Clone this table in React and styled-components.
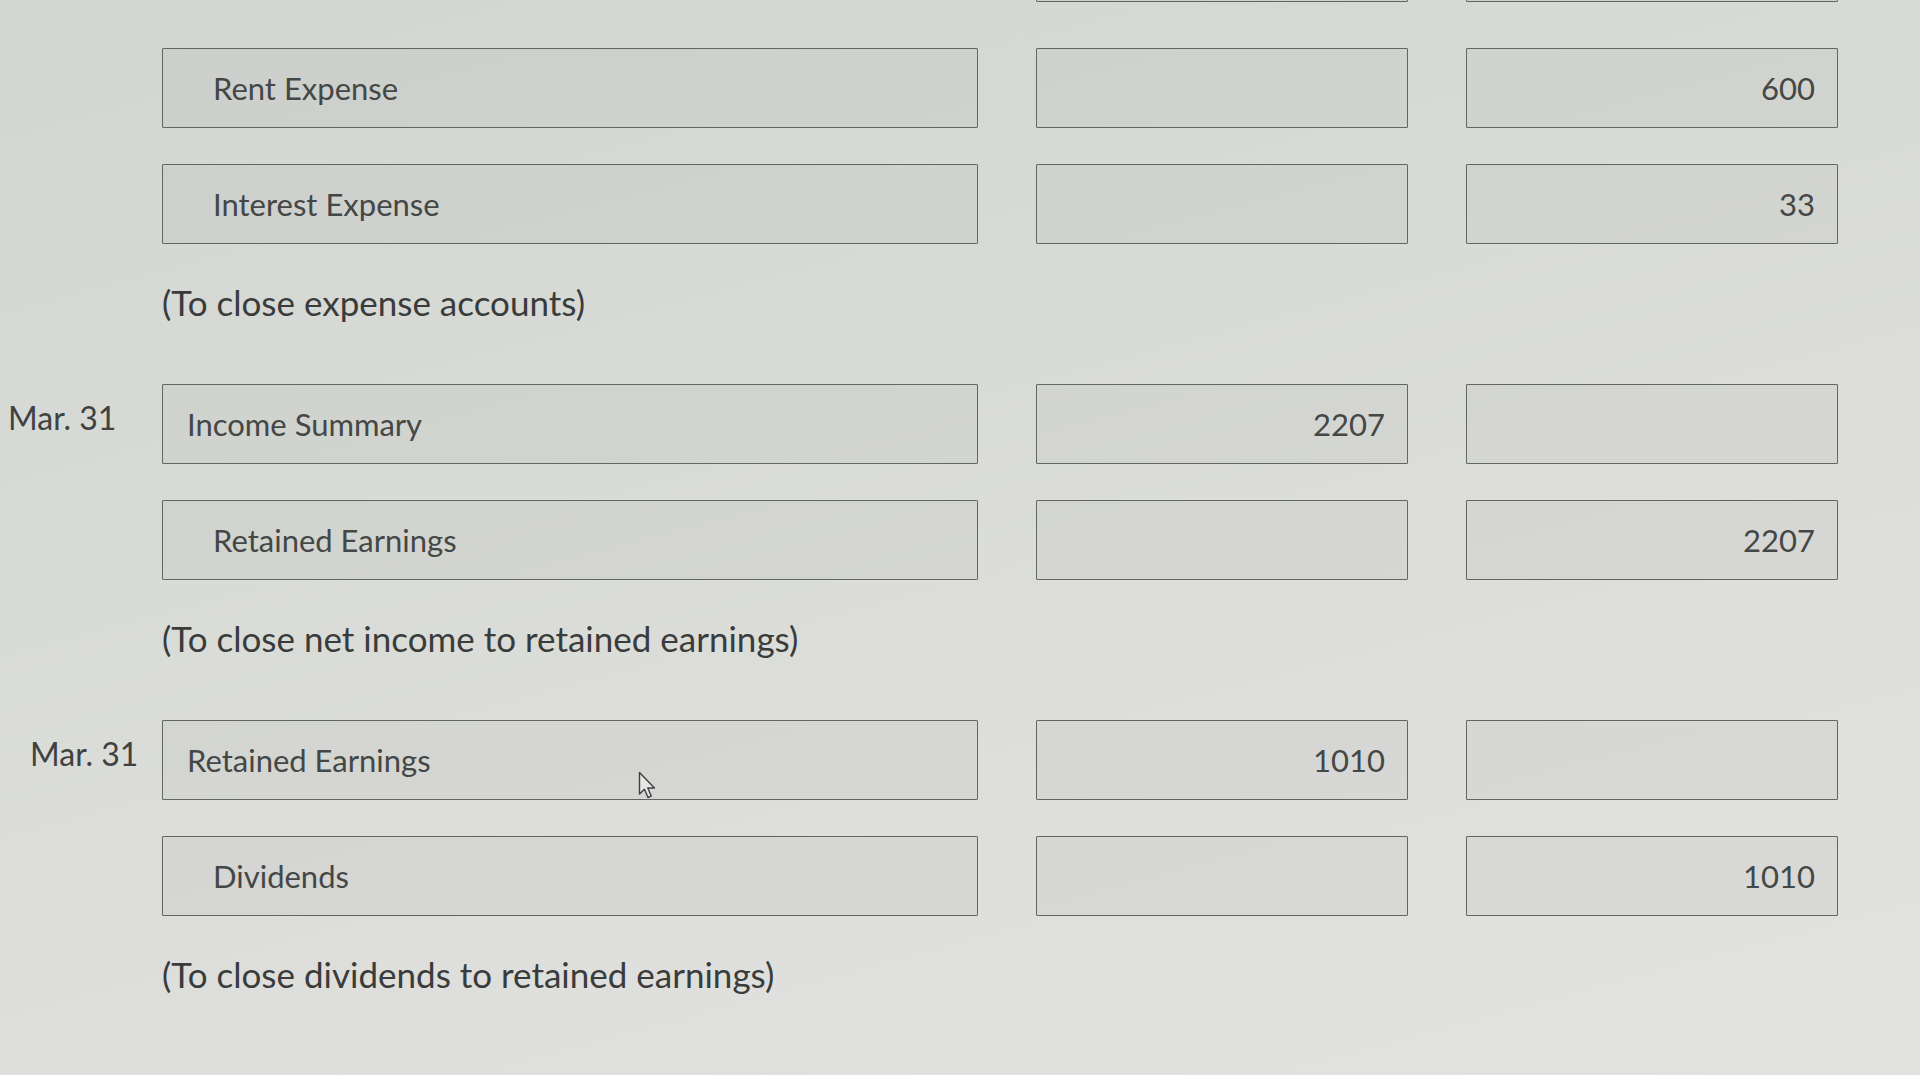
import styled, { createGlobalStyle } from 'styled-components';

const GlobalStyle = createGlobalStyle`
  html, body {
    margin: 0;
    padding: 0;
    height: 100%;
  }
  body {
    font-family: Lato, "Open Sans", "Liberation Sans", sans-serif;
    background: linear-gradient(165deg, #d2d5d1 0%, #d9dbd7 40%, #dfe0dd 75%, #e2e3e0 100%);
    overflow: hidden;
  }
`;

const Page = styled.main`
  position: relative;
  width: 1920px;
  height: 1075px;
  overflow: hidden;
  padding-left: 8px;
  box-sizing: border-box;
`;

const Journal = styled.div`
  display: flex;
  flex-direction: column;
  margin-top: -78px;
`;

const Entry = styled.section`
  display: flex;
  flex-direction: column;
  gap: 36px;
`;

const Line = styled.div`
  display: grid;
  grid-template-columns: 96px 816px 372px 372px;
  column-gap: 58px;
  height: 80px;
`;

const DateCell = styled.div`
  align-self: start;
  padding-top: 14px;
  padding-left: ${({ $shift }) => $shift || 0}px;
  font-size: 32px;
  color: #3f4241;
  white-space: nowrap;
`;

const Field = styled.div`
  display: flex;
  align-items: center;
  justify-content: ${({ $num }) => ($num ? 'flex-end' : 'flex-start')};
  padding: ${({ $num, $indent }) =>
    $num ? '0 22px 0 0' : `0 0 0 ${$indent ? 50 : 24}px`};
  border: 1.5px solid #616563;
  border-radius: 1px;
  background: rgba(95, 100, 95, 0.06);
  font-size: 31px;
  color: #444746;
  box-sizing: border-box;
  visibility: ${({ $hidden }) => ($hidden ? 'hidden' : 'visible')};
`;

const Note = styled.p`
  margin: 38px 0 62px 154px;
  font-size: 35px;
  line-height: 40px;
  color: #393c3b;
`;

const Cursor = styled.svg`
  position: absolute;
  left: 638px;
  top: 771px;
`;

const entries = [
  {
    lines: [
      { date: 'Mar. 31', account: 'Income Summary', debit: '', credit: '' },
      { account: 'Salaries Expense', indent: true, debit: '', credit: '' },
    ],
  },
  {
    lines: [
      { account: 'Rent Expense', indent: true, debit: '', credit: '600' },
      { account: 'Interest Expense', indent: true, debit: '', credit: '33' },
    ],
    note: '(To close expense accounts)',
  },
  {
    lines: [
      { date: 'Mar. 31', account: 'Income Summary', debit: '2207', credit: '' },
      { account: 'Retained Earnings', indent: true, debit: '', credit: '2207' },
    ],
    note: '(To close net income to retained earnings)',
  },
  {
    lines: [
      { date: 'Mar. 31', account: 'Retained Earnings', debit: '1010', credit: '', shift: 22 },
      { account: 'Dividends', indent: true, debit: '', credit: '1010' },
    ],
    note: '(To close dividends to retained earnings)',
  },
];

function JournalLine({ line, hideAccount }) {
  return (
    <Line>
      <DateCell $shift={line.shift}>{line.date || ''}</DateCell>
      <Field $indent={line.indent} $hidden={hideAccount}>{line.account}</Field>
      <Field $num>{line.debit}</Field>
      <Field $num>{line.credit}</Field>
    </Line>
  );
}

export default function App() {
  return (
    <Page>
      <GlobalStyle />
      <Journal>
        {/* the previous entry is scrolled off the top; only its last line peeks in */}
        <Entry style={{ marginBottom: 46 }}>
          <JournalLine line={entries[0].lines[1]} hideAccount />
        </Entry>
        {entries.slice(1).map((entry, i) => (
          <div key={i}>
            <Entry>
              {entry.lines.map((line, j) => (
                <JournalLine key={j} line={line} />
              ))}
            </Entry>
            <Note>{entry.note}</Note>
          </div>
        ))}
      </Journal>
      <Cursor width="20" height="30" viewBox="0 0 20 30">
        <path
          d="M1.5 1.5 L1.5 23 L6.5 18.2 L10 26.5 L13.2 25.1 L9.8 17 L16.5 17 Z"
          fill="#e6e7e4"
          stroke="#3e4140"
          strokeWidth="1.4"
          strokeLinejoin="round"
        />
      </Cursor>
    </Page>
  );
}
